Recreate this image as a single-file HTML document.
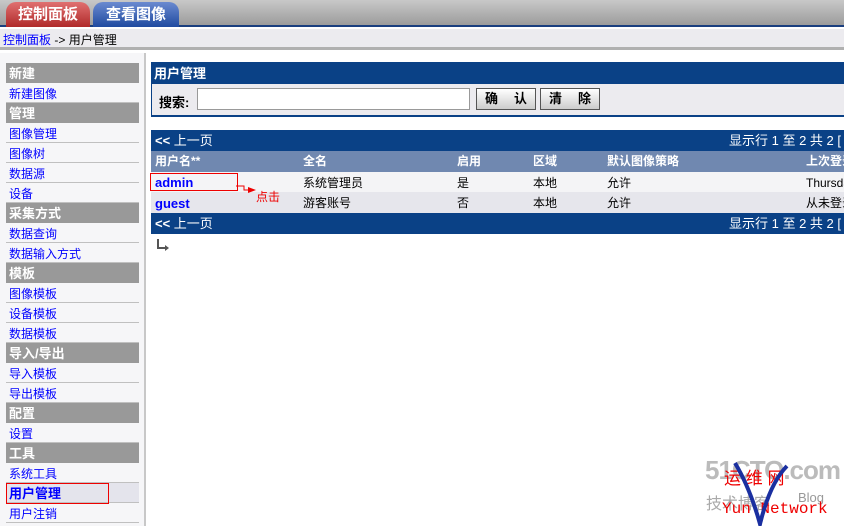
<!DOCTYPE html><html><head><meta charset="utf-8"><style>
*{margin:0;padding:0;box-sizing:border-box}
body{width:844px;height:526px;overflow:hidden;background:#fff;font-family:"Liberation Sans","Noto Sans CJK SC",sans-serif;font-size:12px;position:relative}
.top{position:absolute;left:0;top:0;width:844px;height:27px;background:linear-gradient(#c8c8c8,#9c9c9c);border-bottom:2px solid #1a3f7f}
.tab{position:absolute;top:2px;height:25px;border-radius:10px 10px 0 0;color:#fff;font-weight:bold;font-size:15px;text-align:center;line-height:26px}
.bc{position:absolute;left:0;top:29px;width:844px;height:21px;background:#ecebef;border-bottom:3px solid #b0b0b0;font-size:12px;line-height:23px;padding-left:3px}
.side{position:absolute;left:0;top:53px;width:146px;height:473px;background:#f6f6f8;border-right:2px solid #c8c8c8}
.it{position:absolute;left:6px;width:133px;height:20px;line-height:22px;padding-left:3px;color:#00f;border-bottom:1px solid #c0c0c0}
.hd{background:#999;color:#fff;font-weight:bold;font-size:13px;border:none;line-height:21px}
.blue{background:#0a4186;color:#fff}
.abs{position:absolute}
</style></head><body>
<div class="top"></div>
<div class="tab" style="left:6px;width:84px;background:linear-gradient(#e07070,#b02a2a)">控制面板</div>
<div class="tab" style="left:93px;width:86px;background:linear-gradient(#6a8ad0,#1f4aa0)">查看图像</div>
<div class="bc"><span style="color:#00f">控制面板</span> -&gt; 用户管理</div>
<div class="side">
<div class="it hd" style="top:10px">新建</div>
<div class="it" style="top:30px">新建图像</div>
<div class="it hd" style="top:50px">管理</div>
<div class="it" style="top:70px">图像管理</div>
<div class="it" style="top:90px">图像树</div>
<div class="it" style="top:110px">数据源</div>
<div class="it" style="top:130px">设备</div>
<div class="it hd" style="top:150px">采集方式</div>
<div class="it" style="top:170px">数据查询</div>
<div class="it" style="top:190px">数据输入方式</div>
<div class="it hd" style="top:210px">模板</div>
<div class="it" style="top:230px">图像模板</div>
<div class="it" style="top:250px">设备模板</div>
<div class="it" style="top:270px">数据模板</div>
<div class="it hd" style="top:290px">导入/导出</div>
<div class="it" style="top:310px">导入模板</div>
<div class="it" style="top:330px">导出模板</div>
<div class="it hd" style="top:350px">配置</div>
<div class="it" style="top:370px">设置</div>
<div class="it hd" style="top:390px">工具</div>
<div class="it" style="top:410px">系统工具</div>
<div class="it" style="top:430px;background:#e4e4ec;font-weight:bold;font-size:13px"><span style="position:absolute;left:0;top:0;width:103px;height:21px;border:1px solid #e00"></span>用户管理</div>
<div class="it" style="top:450px">用户注销</div>
</div>
<div class="abs blue" style="left:151px;top:62px;width:693px;height:22px;font-weight:bold;font-size:13px;line-height:24px;padding-left:3px">用户管理</div>
<div class="abs" style="left:151px;top:84px;width:693px;height:33px;background:#ecebef;border-left:1px solid #0a4186;border-bottom:2px solid #0a4186"></div>
<div class="abs" style="left:159px;top:92px;font-weight:bold;font-size:13px">搜索:</div>
<div class="abs" style="left:197px;top:88px;width:273px;height:22px;background:#fff;border:1px solid #999"></div>
<div class="abs" style="left:476px;top:88px;width:60px;height:22px;background:linear-gradient(#fff,#ccc);border:1px solid #555;font-weight:bold;font-size:13px;line-height:20px;padding:0 8px;display:flex;justify-content:space-between"><span>确</span><span>认</span></div>
<div class="abs" style="left:540px;top:88px;width:60px;height:22px;background:linear-gradient(#fff,#ccc);border:1px solid #555;font-weight:bold;font-size:13px;line-height:20px;padding:0 8px;display:flex;justify-content:space-between"><span>清</span><span>除</span></div>
<div class="abs blue" style="left:151px;top:130px;width:693px;height:21px;line-height:22px;font-size:13px;padding-left:4px"><b>&lt;&lt;</b> 上一页<span style="position:absolute;left:578px">显示行 1 至 2 共 2 [</span></div>
<div class="abs" style="left:151px;top:151px;width:693px;height:21px;background:#7088b0;color:#fff;font-weight:bold;font-size:12px;line-height:21px;overflow:hidden">
<span class="abs" style="left:4px">用户名**</span><span class="abs" style="left:152px">全名</span><span class="abs" style="left:306px">启用</span><span class="abs" style="left:382px">区域</span><span class="abs" style="left:456px">默认图像策略</span><span class="abs" style="left:655px;white-space:nowrap">上次登录</span></div>
<div class="abs" style="left:151px;top:172px;width:693px;height:20px;background:#f4f4f6;line-height:22px;overflow:hidden">
<span class="abs" style="left:4px;color:#00f;font-weight:bold;font-size:13px">admin</span><span class="abs" style="left:152px">系统管理员</span><span class="abs" style="left:306px">是</span><span class="abs" style="left:382px">本地</span><span class="abs" style="left:456px">允许</span><span class="abs" style="left:655px">Thursday</span></div>
<div class="abs" style="left:151px;top:192px;width:693px;height:21px;background:#e6e6ec;line-height:23px;overflow:hidden">
<span class="abs" style="left:4px;color:#00f;font-weight:bold;font-size:13px">guest</span><span class="abs" style="left:152px">游客账号</span><span class="abs" style="left:306px">否</span><span class="abs" style="left:382px">本地</span><span class="abs" style="left:456px">允许</span><span class="abs" style="left:655px;white-space:nowrap">从未登录</span></div>
<div class="abs blue" style="left:151px;top:213px;width:693px;height:21px;line-height:22px;font-size:13px;padding-left:4px"><b>&lt;&lt;</b> 上一页<span style="position:absolute;left:578px">显示行 1 至 2 共 2 [</span></div>
<div class="abs" style="left:150px;top:173px;width:88px;height:18px;border:1px solid #e00"></div>
<svg class="abs" style="left:236px;top:184px" width="22" height="12"><path d="M0 2 H8 V6 H14" stroke="#e00" fill="none"/><path d="M12 3 L20 6 L12 9Z" fill="#e00"/></svg>
<div class="abs" style="left:256px;top:188px;color:#e00;font-size:12px">点击</div>
<svg class="abs" style="left:156px;top:238px" width="14" height="14"><path d="M2 1 V10 H10" stroke="#555" stroke-width="2" fill="none"/><path d="M9 7 L13 10 L9 13Z" fill="#555"/></svg>
<div class="abs" style="left:705px;top:455px;color:#bbb;font-weight:bold;font-size:26px;letter-spacing:-1px">51CTO.com</div>
<div class="abs" style="left:706px;top:490px;color:#aaa;font-size:16px">技术博客</div>
<div class="abs" style="left:798px;top:490px;color:#999;font-size:13px">Blog</div>
<div class="abs" style="left:724px;top:464px;color:#e00;font-size:17px">运 维 网</div>
<div class="abs" style="left:722px;top:500px;color:#e00;font-size:16px;font-family:'Liberation Mono',monospace">Yun Network</div>
<svg class="abs" style="left:725px;top:458px" width="70" height="68"><path d="M10 5 Q25 30 35 66 Q45 25 62 8" stroke="#1a2fa0" stroke-width="4" fill="none"/></svg>
</body></html>
